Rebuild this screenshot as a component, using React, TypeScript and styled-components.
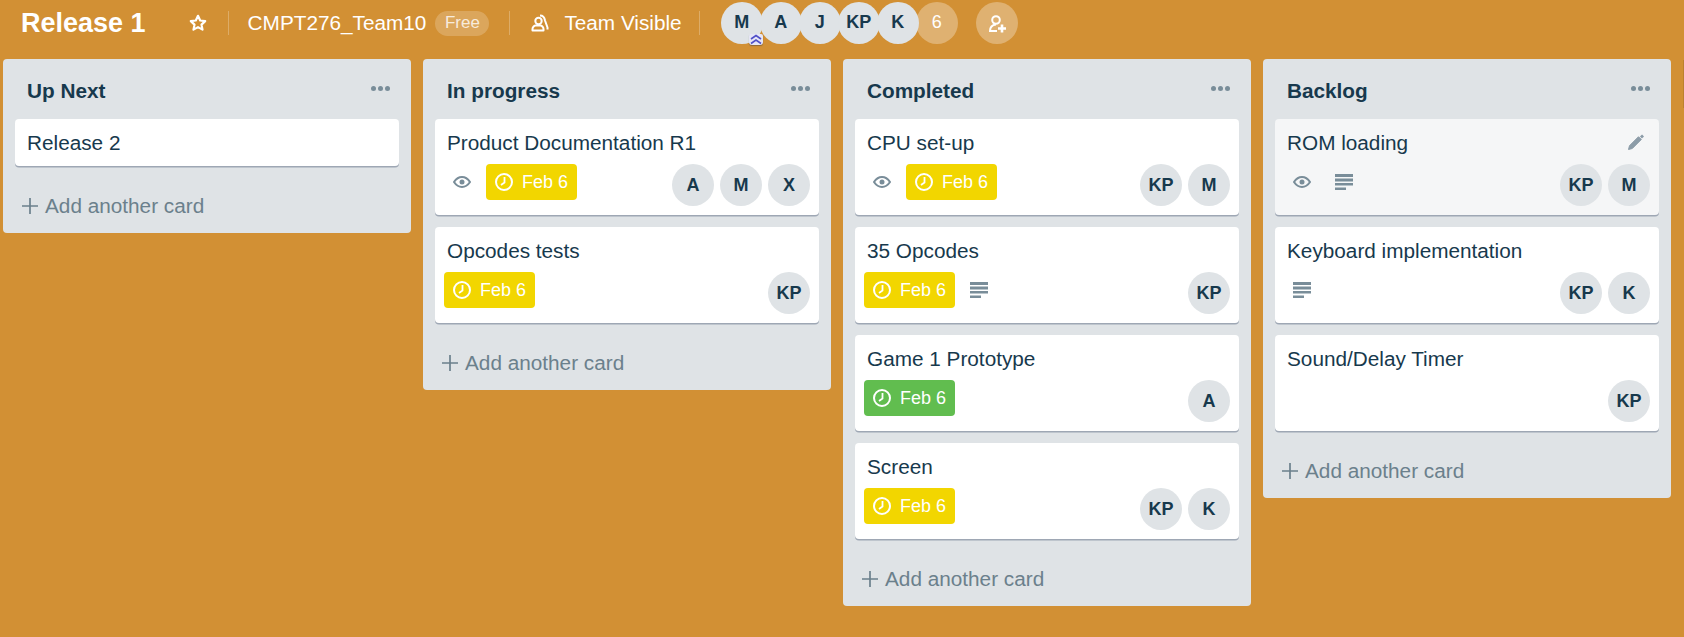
import styled, { createGlobalStyle } from 'styled-components';

const GlobalStyle = createGlobalStyle`
  html, body {
    margin: 0;
    height: 100%;
    overflow: hidden;
  }
  body {
    background: #d29034;
    font-family: "Liberation Sans", Arial, sans-serif;
    color: #17394d;
  }
`;

type CardData = {
  title: string;
  watched?: boolean;
  due?: 'yellow' | 'green';
  desc?: boolean;
  members?: string[];
  hovered?: boolean;
};

type ListData = {
  name: string;
  cards: CardData[];
};

const LISTS: ListData[] = [
  {
    name: 'Up Next',
    cards: [{ title: 'Release 2' }],
  },
  {
    name: 'In progress',
    cards: [
      { title: 'Product Documentation R1', watched: true, due: 'yellow', members: ['A', 'M', 'X'] },
      { title: 'Opcodes tests', due: 'yellow', members: ['KP'] },
    ],
  },
  {
    name: 'Completed',
    cards: [
      { title: 'CPU set-up', watched: true, due: 'yellow', members: ['KP', 'M'] },
      { title: '35 Opcodes', due: 'yellow', desc: true, members: ['KP'] },
      { title: 'Game 1 Prototype', due: 'green', members: ['A'] },
      { title: 'Screen', due: 'yellow', members: ['KP', 'K'] },
    ],
  },
  {
    name: 'Backlog',
    cards: [
      { title: 'ROM loading', watched: true, desc: true, members: ['KP', 'M'], hovered: true },
      { title: 'Keyboard implementation', desc: true, members: ['KP', 'K'] },
      { title: 'Sound/Delay Timer', members: ['KP'] },
    ],
  },
];

const StarIcon = () => (
  <svg width="18" height="18" viewBox="0 0 18 18" fill="none" stroke="#fff" strokeWidth="2.200" strokeLinejoin="round">
    <path d="M9 1.800l2.200 4.700 5 .6-3.700 3.500 1 5L9 13.100l-4.500 2.500 1-5-3.700-3.500 5-.6z" />
  </svg>
);

const TeamIcon = () => (
  <svg width="18" height="18" viewBox="0 0 18 18" fill="none" stroke="#fff" strokeWidth="2" strokeLinejoin="round">
    <circle cx="7.500" cy="7" r="3.200" />
    <path d="M1.500 16.500v-1.500c0-2 2-3.500 3-3.500h5c1 0 3 1.500 3 3.500v1.500z" />
    <path d="M9 1.500c3 0 4.500 2 5 5l2.500 7v2" />
  </svg>
);

const AddMemberIcon = () => (
  <svg width="18" height="18" viewBox="0 0 18 18" fill="none" stroke="#fff" strokeWidth="2">
    <circle cx="8" cy="5" r="3.800" />
    <path d="M8 9.500c-4 .5-6 3-6 6.500h7" />
    <path d="M14 9.500v8M10 13.500h8" strokeWidth="2.600" />
  </svg>
);

const EyeIcon = () => (
  <svg width="18" height="12" viewBox="0 0 18 12" fill="none" stroke="#798d99" strokeWidth="2">
    <path d="M1 6c2-3 4.800-5 8-5s6 2 8 5c-2 3-4.800 5-8 5S3 9 1 6z" />
    <circle cx="9" cy="6" r="2.500" fill="#798d99" stroke="none" />
  </svg>
);

const DescIcon = () => (
  <svg width="18" height="16" viewBox="0 0 18 16" fill="#798d99">
    <rect x="0" y="0" width="18" height="3" />
    <rect x="0" y="4.500" width="18" height="3" />
    <rect x="0" y="9" width="18" height="2.500" />
    <rect x="0" y="13.500" width="11" height="2.500" />
  </svg>
);

const ClockIcon = () => (
  <svg width="18" height="18" viewBox="0 0 18 18" fill="none" stroke="#fff" strokeWidth="2">
    <circle cx="9" cy="9" r="8" />
    <path d="M9.500 4v5.500L6 12" strokeWidth="1.800" />
  </svg>
);

const PencilIcon = () => (
  <svg width="16" height="16" viewBox="0 0 16 16" fill="none" stroke="#8c9ca8">
    <path d="M0.500 15.500l1-3.800L10.500 2.700l2.800 2.800-9 9z" fill="#8c9ca8" strokeWidth="1" />
    <path d="M13 1.500l2 2" strokeWidth="3" />
  </svg>
);

const PlusIcon = () => (
  <svg width="16" height="16" viewBox="0 0 16 16" stroke="#6b808c" strokeWidth="1.700">
    <path d="M8 0v16M0 8h16" />
  </svg>
);

const CrownIcon = () => (
  <svg width="14" height="11" viewBox="0 0 14 11" fill="none" stroke="#5050c8" strokeWidth="1.600">
    <path d="M2 5L7 1.500 12 5" />
    <path d="M2 9.500L7 6l5 3.500" />
  </svg>
);

const App = () => {
  return (
    <Board>
      <GlobalStyle />
      <BoardHeader>
        <BoardTitle>Release 1</BoardTitle>
        <StarButton>
          <StarIcon />
        </StarButton>
        <Divider />
        <TeamName>CMPT276_Team10</TeamName>
        <FreeBadge>Free</FreeBadge>
        <Divider />
        <VisibilityButton>
          <TeamIcon />
          <span>Team Visible</span>
        </VisibilityButton>
        <Divider />
        <HeaderMembers>
          {['M', 'A', 'J', 'KP', 'K'].map((m, i) => (
            <HeaderAvatar key={m}>
              {m}
              {i === 0 && (
                <Crown>
                  <CrownIcon />
                </Crown>
              )}
            </HeaderAvatar>
          ))}
          <MoreMembers>6</MoreMembers>
        </HeaderMembers>
        <InviteButton>
          <AddMemberIcon />
        </InviteButton>
      </BoardHeader>

      <ListsRow>
        {LISTS.map(list => (
          <List key={list.name}>
            <ListHeader>
              <ListName>{list.name}</ListName>
              <MenuDots>
                <i />
                <i />
                <i />
              </MenuDots>
            </ListHeader>
            <Cards>
              {list.cards.map(card => (
                <Card key={card.title} $hovered={card.hovered}>
                  <CardTitle>{card.title}</CardTitle>
                  {card.hovered && (
                    <EditIcon>
                      <PencilIcon />
                    </EditIcon>
                  )}
                  {(card.members || card.due) && (
                    <CardFooter>
                      <Badges>
                        {card.watched && (
                          <IconSlot>
                            <EyeIcon />
                          </IconSlot>
                        )}
                        {card.due && (
                          <DueBadge $color={card.due}>
                            <ClockIcon />
                            Feb 6
                          </DueBadge>
                        )}
                        {card.desc && (
                          <IconSlot>
                            <DescIcon />
                          </IconSlot>
                        )}
                      </Badges>
                      <Members>
                        {card.members?.map(m => (
                          <Member key={m}>{m}</Member>
                        ))}
                      </Members>
                    </CardFooter>
                  )}
                </Card>
              ))}
            </Cards>
            <AddCard>
              <PlusIcon />
              Add another card
            </AddCard>
          </List>
        ))}
      </ListsRow>
      <ScrollThumb />
    </Board>
  );
};

export default App;

const Board = styled.div`
  position: relative;
  display: flex;
  flex-direction: column;
  height: 100vh;
`;

const ScrollThumb = styled.div`
  position: absolute;
  top: 60px;
  right: 0;
  width: 1px;
  height: 48px;
  background: rgba(0, 0, 0, 0.1);
`;

const BoardHeader = styled.div`
  display: flex;
  align-items: center;
  height: 59px;
  padding: 0 0 14px 21px;
  box-sizing: border-box;
  color: #fff;
`;

const BoardTitle = styled.h1`
  margin: 1px 0 0;
  font-size: 27px;
  line-height: 33px;
  font-weight: 700;
  color: #fff;
`;

const StarButton = styled.div`
  display: flex;
  margin: 1px 21px 0 43px;
`;

const Divider = styled.div`
  width: 1px;
  height: 24px;
  background: rgba(255, 255, 255, 0.25);
`;

const TeamName = styled.span`
  margin-left: 19px;
  font-size: 20.750px;
  line-height: 30px;
`;

const FreeBadge = styled.span`
  display: inline-flex;
  align-items: center;
  justify-content: center;
  width: 54px;
  height: 25px;
  margin: 1px 20px 0 9px;
  border-radius: 13px;
  background: rgba(255, 255, 255, 0.2);
  font-size: 17px;
  color: rgba(255, 255, 255, 0.8);
`;

const VisibilityButton = styled.div`
  display: flex;
  align-items: center;
  gap: 15px;
  margin: 0 17px 0 21px;
  font-size: 20.750px;
  line-height: 30px;
`;

const HeaderMembers = styled.div`
  display: flex;
  margin-left: 21px;
`;

const HeaderAvatar = styled.div`
  position: relative;
  z-index: 1;
  display: flex;
  align-items: center;
  justify-content: center;
  width: 42px;
  height: 42px;
  margin-right: -3px;
  border-radius: 50%;
  background: #dfe3e6;
  color: #17394d;
  font-size: 18px;
  font-weight: 700;
`;

const Crown = styled.span`
  position: absolute;
  right: 0;
  bottom: -1px;
  display: flex;
  background: #e6e6f5;
  border-radius: 2px 2px 3px 3px;
  box-shadow: 0 1px 1px rgba(9, 30, 66, 0.35);
`;

const MoreMembers = styled.div`
  display: flex;
  align-items: center;
  justify-content: center;
  width: 42px;
  height: 42px;
  border-radius: 50%;
  background: rgba(255, 255, 255, 0.3);
  color: #fff;
  font-size: 18px;
`;

const InviteButton = styled.div`
  display: flex;
  align-items: center;
  justify-content: center;
  width: 42px;
  height: 42px;
  margin-left: 18px;
  padding-top: 2px;
  box-sizing: border-box;
  border-radius: 50%;
  background: rgba(255, 255, 255, 0.3);
`;

const ListsRow = styled.div`
  display: flex;
  align-items: flex-start;
  gap: 12px;
  padding-left: 3px;
`;

const List = styled.div`
  width: 408px;
  flex: none;
  border-radius: 4px;
  background: #dfe3e6;
`;

const ListHeader = styled.div`
  display: flex;
  justify-content: space-between;
  height: 60px;
  padding: 17px 21px 0 24px;
  box-sizing: border-box;
`;

const ListName = styled.h2`
  margin: 0;
  font-size: 20.750px;
  line-height: 30px;
  font-weight: 700;
  color: #17394d;
`;

const MenuDots = styled.div`
  display: flex;
  gap: 2px;
  margin-top: 10px;

  i {
    display: block;
    width: 5px;
    height: 5px;
    border-radius: 50%;
    background: #798d99;
  }
`;

const Cards = styled.div`
  display: flex;
  flex-direction: column;
  gap: 12px;
  padding: 0 12px;
`;

const Card = styled.div<{ $hovered?: boolean }>`
  position: relative;
  padding: 9px 12px 8px;
  border-radius: 4px;
  background: ${props => (props.$hovered ? '#f5f6f7' : '#fff')};
  box-shadow: 0 1.500px 0 rgba(9, 30, 66, 0.3);
`;

const CardTitle = styled.div`
  font-size: 20.750px;
  line-height: 30px;
  color: #17394d;
`;

const EditIcon = styled.span`
  position: absolute;
  top: 15px;
  right: 15px;
  display: flex;
`;

const CardFooter = styled.div`
  display: flex;
  justify-content: space-between;
  align-items: flex-start;
  margin: 6px -3px 1px -3px;
`;

const Badges = styled.div`
  display: flex;
  gap: 6px;
`;

const IconSlot = styled.span`
  display: flex;
  align-items: center;
  justify-content: center;
  width: 36px;
  height: 36px;
`;

const DueBadge = styled.span<{ $color: 'yellow' | 'green' }>`
  display: flex;
  align-items: center;
  gap: 9px;
  height: 36px;
  padding: 0 9px;
  border-radius: 4px;
  background: ${props => (props.$color === 'green' ? '#61bd4f' : '#f2d600')};
  color: #fff;
  font-size: 18px;
`;

const Members = styled.div`
  display: flex;
  gap: 6px;
`;

const Member = styled.div`
  display: flex;
  align-items: center;
  justify-content: center;
  width: 42px;
  height: 42px;
  padding-top: 1px;
  box-sizing: border-box;
  border-radius: 50%;
  background: #dfe3e6;
  color: #17394d;
  font-size: 18px;
  font-weight: 700;
`;

const AddCard = styled.div`
  display: flex;
  align-items: center;
  gap: 7px;
  height: 30px;
  padding: 25px 0 12px 19px;
  color: #6b808c;
  font-size: 20.750px;
`;
